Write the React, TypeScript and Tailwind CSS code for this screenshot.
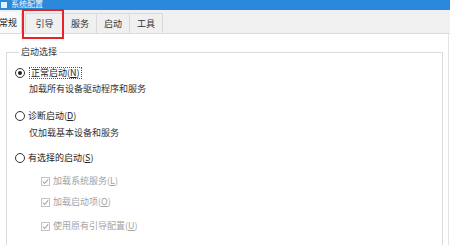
import React from 'react';

const Radio = ({ checked }: { checked?: boolean }) => (
  <span className="w-[10px] h-[10px] rounded-full border border-[#333] bg-white flex items-center justify-center shrink-0">
    {checked && <span className="w-[4px] h-[4px] rounded-full bg-[#222]" />}
  </span>
);

const Check = () => (
  <span className="w-[9px] h-[9px] border border-[#c4c4c4] bg-white flex items-center justify-center shrink-0">
    <svg width="7" height="7" viewBox="0 0 7 7">
      <path d="M0.8 3.6 L2.7 5.4 L6.2 1.4" fill="none" stroke="#a8a8a8" strokeWidth="1.1" />
    </svg>
  </span>
);

const tabs = ['引导', '服务', '启动', '工具'];

const App: React.FC = () => {
  return (
    <div
      className="w-[450px] h-[245px] bg-white overflow-hidden relative flex flex-col text-[9px] leading-[12px] text-[#222]"
      style={{ fontFamily: '"Noto Sans CJK SC", "Noto Sans", sans-serif' }}
    >
      {/* Title bar */}
      <header className="block h-[10px] bg-[#2a89da] shrink-0 overflow-hidden">
        <div className="flex items-end h-full gap-[4px] pl-[1px] pb-[2px]">
          <span className="w-[6px] h-[6px] bg-sky-100 shrink-0" />
          <span className="text-sky-50 text-[8px] leading-[8px] whitespace-nowrap">系统配置</span>
        </div>
      </header>

      {/* Tab strip */}
      <div className="h-[24px] bg-[#f0f0f0] border-b border-[#dcdcdc] flex items-end shrink-0 pr-[2px]">
        <div className="h-[21px] w-[22px] bg-[#fafafa] border-r border-[#d6d6d6] flex items-center justify-end pr-[4px] overflow-hidden">
          <span className="whitespace-nowrap">常规</span>
        </div>
        <div className="flex items-end ml-[3px]">
          {tabs.map((t, i) => (
            <div
              key={t}
              className={`h-[20px] border-t border-r border-[#d9d9d9] bg-[#f0f0f0] flex items-center justify-center text-[#333] ${i === 0 ? 'w-[39px] border-l' : 'w-[33px]'}`}
            >
              {t}
            </div>
          ))}
        </div>
      </div>

      {/* Content */}
      <div className="flex-1 border-r border-[#e4e4e4] mr-[1px] px-[6px] pt-[12px]">
        <fieldset className="border border-[#dcdcdc] h-[240px] pl-[8px] pr-[8px] mr-[-1px]">
          <legend className="ml-[4px] px-[2px] text-[#333]">启动选择</legend>

          <div className="flex items-center gap-[4px] mt-[9px]">
            <Radio checked />
            <span className="border border-dotted border-[#555] px-[1px] leading-[10px]">
              正常启动(<u>N</u>)
            </span>
          </div>
          <div className="ml-[14px] mt-[4px] text-[#333]">加载所有设备驱动程序和服务</div>

          <div className="flex items-center gap-[3px] mt-[15px]">
            <Radio />
            <span>诊断启动(<u>D</u>)</span>
          </div>
          <div className="ml-[14px] mt-[5px] text-[#333]">仅加载基本设备和服务</div>

          <div className="flex items-center gap-[3px] mt-[13px]">
            <Radio />
            <span>有选择的启动(<u>S</u>)</span>
          </div>

          <div className="ml-[26px] flex flex-col text-[#a3a3a3]">
            <div className="flex items-center gap-[3px] mt-[11px]">
              <Check />
              <span>加载系统服务(<u>L</u>)</span>
            </div>
            <div className="flex items-center gap-[3px] mt-[9px]">
              <Check />
              <span>加载启动项(<u>O</u>)</span>
            </div>
            <div className="flex items-center gap-[3px] mt-[12px]">
              <Check />
              <span>使用原有引导配置(<u>U</u>)</span>
            </div>
          </div>
        </fieldset>
      </div>

      {/* Annotation: red highlight around the boot tab */}
      <div className="absolute left-[22px] top-[9px] w-[42px] h-[30px] border-2 border-[#e5252a]" />
    </div>
  );
};

export default App;
